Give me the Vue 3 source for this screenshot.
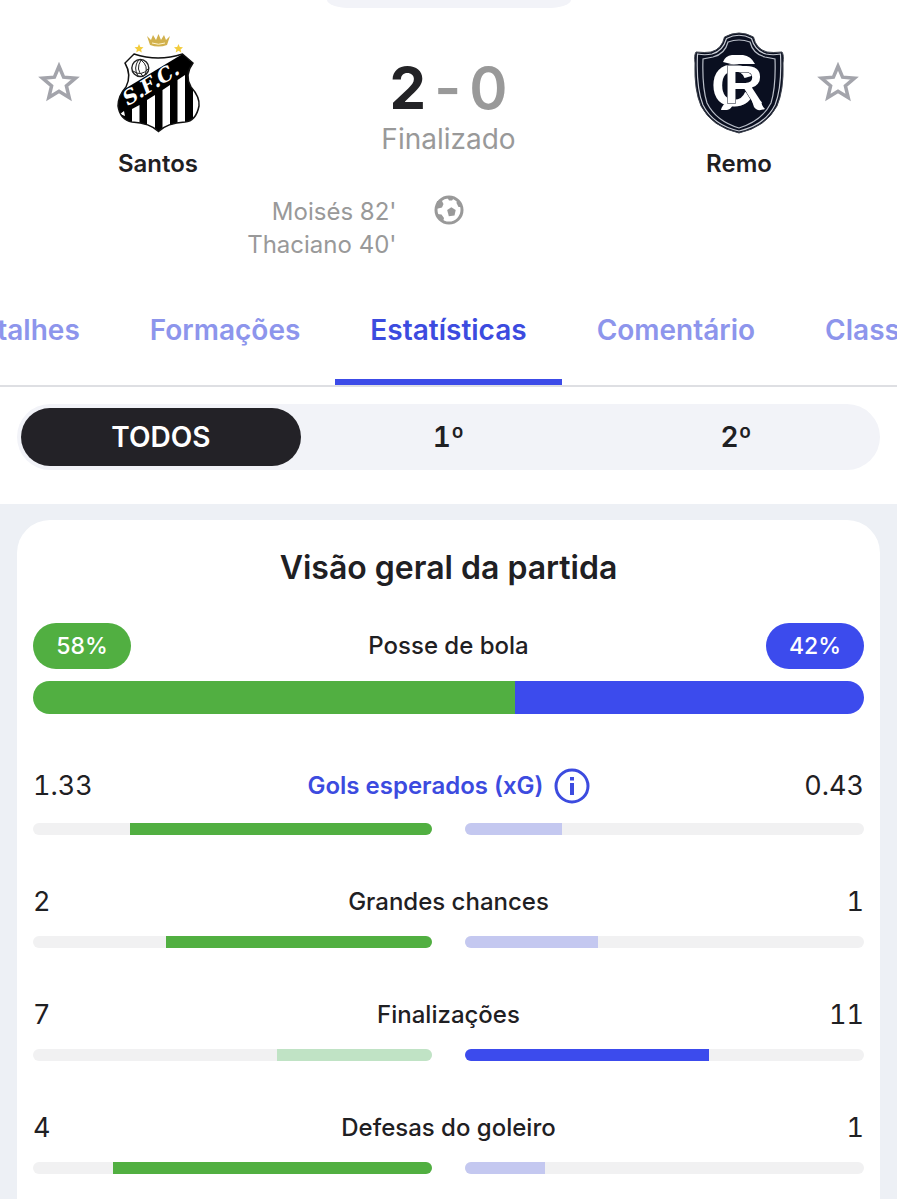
<script setup>
import { ref } from 'vue'

const tabsBefore = ['Detalhes', 'Formações']
const tabsAfter = ['Comentário', 'Classificação']
const periods = ['TODOS', '1º', '2º']
const period = ref('TODOS')
const scorers = ["Moisés 82'", "Thaciano 40'"]

const stats = [
  { label: 'Gols esperados (xG)', home: '1.33', away: '0.43', info: true },
  { label: 'Grandes chances', home: '2', away: '1' },
  { label: 'Finalizações', home: '7', away: '11' },
  { label: 'Defesas do goleiro', home: '4', away: '1' },
]

function share(stat, side) {
  const home = Number(stat.home)
  const away = Number(stat.away)
  return `${((side === 'home' ? home : away) / (home + away)) * 100}%`
}
function leads(stat, side) {
  const diff = Number(stat.home) - Number(stat.away)
  return side === 'home' ? diff > 0 : diff < 0
}
</script>

<template>
  <div class="page">
    <header class="match">
      <div class="handle"></div>
      <div class="teams">
        <button class="star" type="button" aria-label="Favoritar Santos">
          <svg viewBox="0 0 42 42"><path d="M21 4.200 L25.600 15.200 L37.500 16.200 L28.400 23.900 L31.200 35.600 L21 29.300 L10.800 35.600 L13.600 23.900 L4.500 16.200 L16.400 15.200 Z" /></svg>
        </button>
        <div class="club">
          <svg class="crest" viewBox="0 0 100 104" aria-hidden="true">
            <defs>
              <clipPath id="santos-shield">
                <path d="M26 24 Q50 32 74.500 24 L85 33 Q76 45 83 57 Q92 67 91 76 Q88 91 77 92 Q59 93 50.500 101.500 Q42 93 24 92 Q12 90 10 76 Q10 66 18 57 Q24 45 17 33 Z" />
              </clipPath>
            </defs>
            <path d="M39 6 L43 10 L45 5 L48 10 L50.500 4 L53 10 L56 5 L58 10 L62 6 L59 15 Q50.500 18 42 15 Z" fill="#d2b14d" />
            <path d="M44 13 Q50.500 15.500 57 13" fill="none" stroke="#fff5d0" stroke-width="1" />
            <path d="M31 14 L32.300 17 L35.500 17.300 L33.100 19.400 L33.800 22.500 L31 20.800 L28.200 22.500 L28.900 19.400 L26.500 17.300 L29.700 17 Z M70.500 14 L71.800 17 L75 17.300 L72.600 19.400 L73.300 22.500 L70.500 20.800 L67.700 22.500 L68.400 19.400 L66 17.300 L69.200 17 Z" fill="#f3cc3c" />
            <g clip-path="url(#santos-shield)">
              <rect width="100" height="104" fill="#000" />
              <path d="M10 63 L74.500 24 L60 15 L10 15 Z" fill="#fff" />
              <path d="M24 79 L31.500 75 V104 H24 Z M39 70 L47 65 V104 H39 Z M54.500 60 L62 55 V104 H54.500 Z M69.500 50 L77 45 V104 H69.500 Z M85 58 L92 64 V84 L85 88 Z M12 84 L16 81 L17 86 Z" fill="#fff" />
              <text x="20" y="76" transform="rotate(-32 20 76)" class="crest-letters">S.F.C.</text>
            </g>
            <circle cx="32.300" cy="38" r="8.500" fill="#fff" stroke="#222" stroke-width="1.400" />
            <path d="M30.500 30 Q25 38 30 46 M33 30 Q27 40 35 46 M33 30 Q41 36 37 45 M25 41 Q33 47 40 39" fill="none" stroke="#222" stroke-width="1" />
            <path d="M26 24 Q50 32 74.500 24 L85 33 Q76 45 83 57 Q92 67 91 76 Q88 91 77 92 Q59 93 50.500 101.500 Q42 93 24 92 Q12 90 10 76 Q10 66 18 57 Q24 45 17 33 Z" fill="none" stroke="#111" stroke-width="1.500" />
          </svg>
          <span class="club-name">Santos</span>
        </div>
        <div class="result">
          <p class="score"><b>2</b><span>-</span><span>0</span></p>
          <p class="status">Finalizado</p>
        </div>
        <div class="club">
          <svg class="crest" viewBox="0 0 100 104" aria-hidden="true">
            <path d="M35.500 7 Q50 -1 64.500 7 Q67 19 78 22 Q84 23 93 22 Q95 25 94 33 Q95 60 88 76 Q77 97 50 103 Q23 97 12 76 Q5 60 6 33 Q5 25 7 22 Q16 23 22 22 Q33 19 35.500 7 Z" fill="#0a0f20" stroke="#3d424d" stroke-width="1" />
            <path d="M37.500 8.500 Q50 2 62.500 8.500 Q66 21 77 24 Q84 25.500 91.500 24 Q93 58 86 75 Q76 95 50 101 Q24 95 14 75 Q7 58 8.500 24 Q16 25.500 23 24 Q34 21 37.500 8.500 Z" fill="#0a0f20" stroke="#c8ccd4" stroke-width="1.200" />
            <path d="M39 12 Q50 8 61 12 Q64 24 76 27 L86 29 Q87 57 82 73 Q73 91 50 98 Q27 91 18 73 Q13 57 14 29 L24 27 Q36 24 39 12 Z" fill="none" stroke="#b9bec8" stroke-width="1.200" />
            <text x="22" y="76" class="monogram monogram-c">C</text>
            <path d="M32 80 Q33 75 38 72 H45 Q43 79 38 80 Z M34 32 Q36 26 43 25 H54 Q62 26 66 34 H42 Z" fill="#fff" />
            <text x="35" y="73" class="monogram monogram-r">R</text>
            <path d="M63 71 H72 Q73 77 76 79 Q68 82 65 77 Z" fill="#fff" />
          </svg>
          <span class="club-name">Remo</span>
        </div>
        <button class="star" type="button" aria-label="Favoritar Remo">
          <svg viewBox="0 0 42 42"><path d="M21 4.200 L25.600 15.200 L37.500 16.200 L28.400 23.900 L31.200 35.600 L21 29.300 L10.800 35.600 L13.600 23.900 L4.500 16.200 L16.400 15.200 Z" /></svg>
        </button>
      </div>
      <div class="goals">
        <ul class="scorers">
          <li v-for="s in scorers" :key="s">{{ s }}</li>
        </ul>
        <svg class="ball" viewBox="0 0 30 30" role="img" aria-label="Gols">
          <circle cx="15" cy="15" r="13" fill="none" stroke="#999" stroke-width="3" />
          <path d="M13.200 15 L17.300 12.300 L21.700 15 L20.500 20.500 L14.800 21.300 Z" fill="#999" />
          <path d="M3 6 L8 6 L9.500 9 L8 12.500 L2 14 Z M3 19 L7.500 19.500 L10 23 L9 27 Z M13 2 L20 3 L18 5.500 L15 5.500 Z M23 5 L28 12 L24.500 12 L22.500 8 Z" fill="#999" />
        </svg>
      </div>
      <nav class="tabs" aria-label="Seções da partida">
        <div class="tab-group before">
          <a v-for="t in tabsBefore" :key="t" class="tab" href="#">{{ t }}</a>
        </div>
        <a class="tab active" href="#" aria-current="page">Estatísticas</a>
        <div class="tab-group">
          <a v-for="t in tabsAfter" :key="t" class="tab" href="#">{{ t }}</a>
        </div>
      </nav>
      <div class="periods">
        <button
          v-for="p in periods"
          :key="p"
          type="button"
          class="period"
          :class="{ selected: period === p }"
          :aria-pressed="period === p"
          @click="period = p"
        >{{ p }}</button>
      </div>
    </header>

    <main class="body">
      <section class="card">
        <h2 class="title">Visão geral da partida</h2>
        <div class="possession">
          <div class="possession-head">
            <span class="badge home">58%</span>
            <span class="label">Posse de bola</span>
            <span class="badge away">42%</span>
          </div>
          <div class="possession-bar">
            <div class="home" :style="{ width: '58%' }"></div>
            <div class="away" :style="{ width: '42%' }"></div>
          </div>
        </div>
        <ul class="stats">
          <li v-for="s in stats" :key="s.label" class="stat">
            <div class="stat-head">
              <span class="value">{{ s.home }}</span>
              <button v-if="s.info" type="button" class="label info">
                {{ s.label }}
                <svg viewBox="0 0 36 36" aria-hidden="true">
                  <circle cx="18" cy="18" r="16" fill="none" stroke="currentColor" stroke-width="3" />
                  <path d="M16 15 H20 V27 H16 Z M16 9 H20 V12.500 H16 Z" fill="currentColor" />
                </svg>
              </button>
              <span v-else class="label">{{ s.label }}</span>
              <span class="value right">{{ s.away }}</span>
            </div>
            <div class="bars">
              <div class="track left">
                <div class="fill home" :class="{ dim: !leads(s, 'home') }" :style="{ width: share(s, 'home') }"></div>
              </div>
              <div class="track">
                <div class="fill away" :class="{ dim: !leads(s, 'away') }" :style="{ width: share(s, 'away') }"></div>
              </div>
            </div>
          </li>
        </ul>
      </section>
    </main>
  </div>
</template>

<style>
body { background: #fff; }
</style>

<style scoped>
.page {
  display: flex;
  flex-direction: column;
  min-height: 100vh;
  box-sizing: border-box;
  color: #1f2023;
  font-family: Inter, "Liberation Sans", sans-serif;
  overflow: hidden;
}
.page * { box-sizing: border-box; }
ul, p, h2 { margin: 0; padding: 0; list-style: none; }
button { border: 0; padding: 0; background: none; font: inherit; color: inherit; cursor: pointer; }
a { text-decoration: none; color: inherit; }
svg { display: block; }

.match { background: #fff; padding-bottom: 34px; }
.handle {
  width: 244px;
  height: 8px;
  margin: 0 auto;
  background: #f2f3f8;
  border-radius: 0 0 24px 24px / 0 0 8px 8px;
}

.teams {
  display: grid;
  grid-template-columns: 42px 118px 1fr 118px 42px;
  column-gap: 19px;
  padding: 22px 38px 0;
}
.star { height: 42px; margin-top: 32px; }
.star svg { width: 42px; height: 42px; fill: none; stroke: #a3a4ab; stroke-width: 3.500; }
.club { display: flex; flex-direction: column; align-items: center; gap: 14px; }
.crest { width: 100px; height: 104px; }
.crest-letters { font: italic 700 20px "DejaVu Serif", serif; fill: #fff; }
.monogram { font-family: "Liberation Sans", sans-serif; font-weight: 700; fill: #fff; stroke: #0a0f20; stroke-width: 1px; paint-order: stroke; }
.monogram-c { font-size: 60px; }
.monogram-r { font-size: 54px; }
.club-name { font-size: 24px; font-weight: 600; line-height: 32px; }
.result { text-align: center; padding-top: 30px; }
.score { display: flex; justify-content: center; gap: 8px; font-size: 58px; line-height: 56px; font-weight: 600; color: #999; }
.score b { font-weight: 700; color: #232326; }
.status { font-size: 28px; line-height: 46px; color: #999; }

.goals {
  display: grid;
  grid-template-columns: 1fr 30px 1fr;
  column-gap: 37px;
  padding-top: 15px;
  color: #999;
  font-size: 24px;
  line-height: 33px;
}
.scorers { text-align: right; }
.ball { width: 30px; height: 30px; }

.tabs { display: flex; margin-top: 22px; border-bottom: 2px solid #dedfe3; overflow: hidden; }
.tab-group { flex: 1 1 0; min-width: 0; display: flex; }
.before { justify-content: flex-end; }
.tab {
  flex: none;
  padding: 27px 35px 29px;
  border-bottom: 6px solid transparent;
  font-size: 28px;
  line-height: 40px;
  font-weight: 600;
  color: #8d95ec;
}
.tab.active { color: #3c4bdf; border-color: #3c4be8; }

.periods {
  display: grid;
  grid-template-columns: repeat(3, 1fr);
  gap: 8px;
  margin: 17px 17px 0;
  padding: 4px;
  border-radius: 33px;
  background: #f2f3f8;
}
.period { height: 58px; border-radius: 29px; font-size: 28px; font-weight: 600; font-variant-numeric: tabular-nums; }
.period.selected { background: #232227; color: #fff; }

.body { flex: 1; display: flex; padding: 16px 17px 0; background: #edf0f5; }
.card { flex: 1; padding: 27px 16px 0; background: #fff; border-radius: 33px 33px 0 0; }
.title { text-align: center; font-size: 32px; line-height: 42px; font-weight: 600; }

.possession { margin-top: 34px; }
.possession-head { display: flex; align-items: center; justify-content: space-between; }
.badge {
  width: 98px;
  border-radius: 23px;
  line-height: 46px;
  text-align: center;
  color: #fff;
  font-size: 23px;
  font-weight: 500;
}
.home { background: #51af41; }
.away { background: #3c4bed; }
.possession-bar { display: flex; height: 33px; margin-top: 12px; border-radius: 17px; overflow: hidden; }
.label { font-size: 24px; line-height: 36px; font-weight: 500; text-align: center; }

.stats { display: flex; flex-direction: column; gap: 49px; margin-top: 51px; }
.stat-head { display: grid; grid-template-columns: 1fr auto 1fr; align-items: center; }
.value { font-size: 27px; line-height: 36px; font-variant-numeric: tabular-nums; }
.right { text-align: right; }
.info { display: flex; align-items: center; gap: 10px; height: 42px; color: #3c4bdf; font-weight: 600; }
.info svg { width: 36px; height: 36px; }
.bars { display: grid; grid-template-columns: 1fr 1fr; gap: 33px; margin-top: 16px; }
.track { display: flex; height: 12px; border-radius: 6px; background: #f1f1f2; overflow: hidden; }
.left { justify-content: flex-end; }
.home.dim { background: #c0e3c5; }
.away.dim { background: #c4c8f0; }
</style>
